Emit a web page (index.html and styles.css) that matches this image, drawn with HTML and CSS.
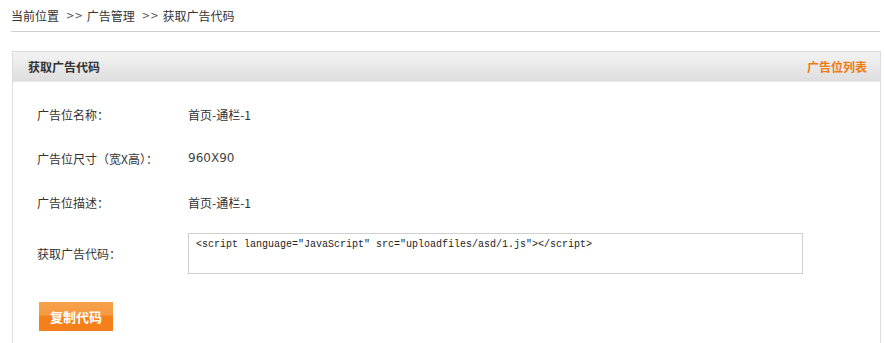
FILE: index.html
```html
<!DOCTYPE html>
<html lang="zh-CN">
<head>
<meta charset="utf-8">
<title>获取广告代码</title>
<link rel="stylesheet" href="styles.css">
</head>
<body>
<div class="crumb">
  <span>当前位置</span><span class="sep">&gt;&gt;</span><span>广告管理</span><span class="sep">&gt;&gt;</span><span>获取广告代码</span>
</div>
<div class="panel">
  <div class="panel-head">
    <span class="title">获取广告代码</span>
    <a class="link" href="#">广告位列表</a>
  </div>
  <div class="panel-body">
    <div class="row"><span class="label">广告位名称：</span><span class="value">首页-通栏-1</span></div>
    <div class="row"><span class="label">广告位尺寸（宽X高）：</span><span class="value num">960X90</span></div>
    <div class="row"><span class="label">广告位描述：</span><span class="value">首页-通栏-1</span></div>
    <div class="row code-row"><span class="label">获取广告代码：</span><div class="code">&lt;script language="JavaScript" src="uploadfiles/asd/1.js"&gt;&lt;/script&gt;</div></div>
    <div class="actions"><button class="btn" type="button">复制代码</button></div>
  </div>
</div>
</body>
</html>
```
FILE: styles.css
```css
html, body {
  margin: 0;
  padding: 0;
  background: #fff;
}
body {
  font-family: "Noto Sans CJK SC", "Noto Sans", sans-serif;
  font-size: 12px;
  color: #333;
}
.crumb {
  margin: 0 5px 0 11px;
  height: 31px;
  line-height: 29px;
  border-bottom: 1px solid #cfcfcf;
  color: #333;
  display: flex;
  align-items: center;
}
.crumb .sep {
  margin: 0 4px 0 7px;
  font-family: "DejaVu Sans", sans-serif;
  font-size: 10px;
  color: #555;
}
.panel {
  margin: 19px 4px 0 12px;
  border: 1px solid #dcdcdc;
  border-bottom: none;
  height: 300px;
}
.panel-head {
  height: 29px;
  background: linear-gradient(#f3f3f3, #dedede);
  display: flex;
  align-items: center;
  justify-content: space-between;
  padding: 0 13px 0 15px;
  border-bottom: 1px solid #e6e6e6;
}
.title {
  font-weight: bold;
  color: #333;
}
.link {
  font-weight: bold;
  color: #ef7b10;
  text-decoration: none;
}
.panel-body {
  padding: 10px 0 0 24px;
}
.row {
  display: grid;
  grid-template-columns: 151px 615px;
  align-items: center;
  height: 44px;
}
.label {
  color: #333;
}
.value {
  color: #333;
}
.num {
  font-family: "DejaVu Sans", sans-serif;
  font-size: 12px;
  color: #444;
}
.code-row {
  height: 41px;
  margin-top: 9px;
}
.code {
  box-sizing: border-box;
  height: 41px;
  border: 1px solid #cfcfcf;
  padding: 4px 7px;
  font-family: "Liberation Mono", monospace;
  font-size: 10px;
  line-height: 14px;
  color: #222;
  background: #fff;
}
.actions {
  padding-top: 28px;
  padding-left: 2px;
}
.btn {
  width: 74px;
  height: 29px;
  border: none;
  padding: 0;
  background: linear-gradient(#f7a04c 0%, #f59a40 45%, #f5801a 50%, #f57f1a 100%);
  color: #fff;
  font-family: "Noto Sans CJK SC", sans-serif;
  font-size: 13px;
  font-weight: bold;
  cursor: pointer;
}
```
